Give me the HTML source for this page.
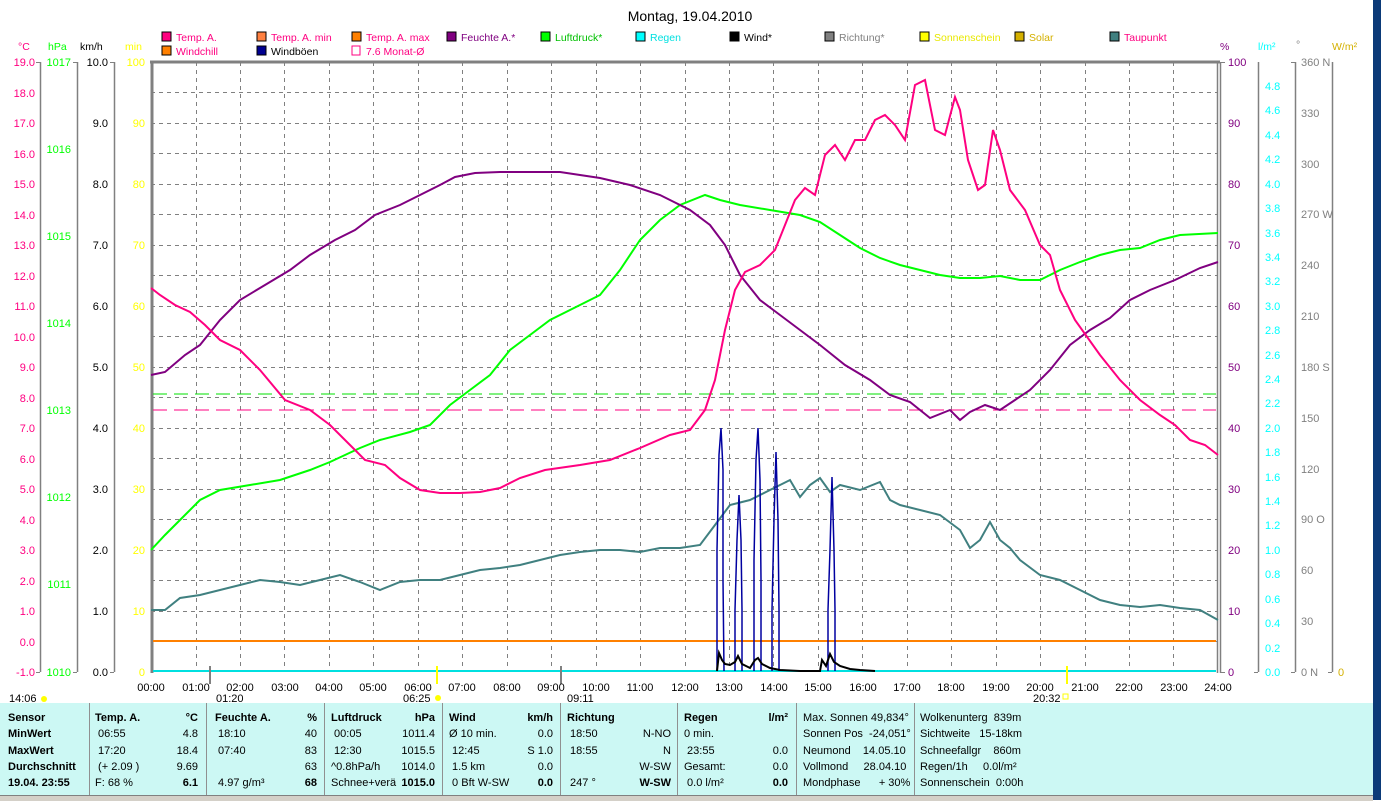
<!DOCTYPE html>
<html><head><meta charset="utf-8"><style>
html,body{margin:0;padding:0;background:#fff;}
body{width:1381px;height:800px;overflow:hidden;position:relative;font-family:"Liberation Sans",sans-serif;}
svg text{font-family:"Liberation Sans",sans-serif;}
.tb{position:absolute;left:0;top:703px;width:1373px;height:92px;background:#ccf8f4;}
.c{position:absolute;font-size:11px;color:#000;white-space:nowrap;}
.b{font-weight:bold}
</style></head><body>
<svg width="1381" height="800" style="position:absolute;left:0;top:0">
<rect x="1373" y="0" width="8" height="800" fill="#0b3a78"/>
<text x="690" y="21" font-size="14" text-anchor="middle">Montag, 19.04.2010</text>
<g font-size="10.5">
<rect x="162" y="32" width="9" height="9" fill="#ff0080" stroke="#000"/><text x="176" y="41" fill="#ff0080">Temp. A.</text>
<rect x="257" y="32" width="9" height="9" fill="#ff8040" stroke="#000"/><text x="271" y="41" fill="#ff0080">Temp. A. min</text>
<rect x="352" y="32" width="9" height="9" fill="#ff8000" stroke="#000"/><text x="366" y="41" fill="#ff0080">Temp. A. max</text>
<rect x="447" y="32" width="9" height="9" fill="#800080" stroke="#000"/><text x="461" y="41" fill="#800080">Feuchte A.*</text>
<rect x="541" y="32" width="9" height="9" fill="#00ff00" stroke="#000"/><text x="555" y="41" fill="#00c000">Luftdruck*</text>
<rect x="636" y="32" width="9" height="9" fill="#00ffff" stroke="#000"/><text x="650" y="41" fill="#00e0e0">Regen</text>
<rect x="730" y="32" width="9" height="9" fill="#000" stroke="#000"/><text x="744" y="41" fill="#000">Wind*</text>
<rect x="825" y="32" width="9" height="9" fill="#808080" stroke="#000"/><text x="839" y="41" fill="#808080">Richtung*</text>
<rect x="920" y="32" width="9" height="9" fill="#ffff00" stroke="#000"/><text x="934" y="41" fill="#e8e800">Sonnenschein</text>
<rect x="1015" y="32" width="9" height="9" fill="#d4b000" stroke="#000"/><text x="1029" y="41" fill="#d4b000">Solar</text>
<rect x="1110" y="32" width="9" height="9" fill="#408080" stroke="#000"/><text x="1124" y="41" fill="#ff0080">Taupunkt</text>
<rect x="162" y="46" width="9" height="9" fill="#ff8000" stroke="#000"/><text x="176" y="55" fill="#ff0080">Windchill</text>
<rect x="257" y="46" width="9" height="9" fill="#000090" stroke="#000"/><text x="271" y="55" fill="#000">Windböen</text>
<path d="M352 46h8v9h-8z" fill="none" stroke="#ff0080"/><text x="366" y="55" fill="#ff0080">7.6 Monat-Ø</text>
<text x="18" y="50" fill="#ff0080">°C</text><text x="48" y="50" fill="#00ff00">hPa</text><text x="80" y="50" fill="#000">km/h</text><text x="125" y="50" fill="#ffff00">min</text>
<text x="1220" y="50" fill="#800080">%</text><text x="1258" y="50" fill="#00ffff">l/m²</text><text x="1296" y="48" fill="#808080">°</text><text x="1332" y="50" fill="#d4b000">W/m²</text>
</g>
<g stroke="#808080" stroke-dasharray="4,4" stroke-width="1">
<path d="M151 92.5H1218M151 123.5H1218M151 153.5H1218M151 184.5H1218M151 214.5H1218M151 245.5H1218M151 275.5H1218M151 306.5H1218M151 336.5H1218M151 367.5H1218M151 397.5H1218M151 428.5H1218M151 458.5H1218M151 489.5H1218M151 519.5H1218M151 550.5H1218M151 580.5H1218M151 611.5H1218M151 641.5H1218"/>
<path d="M196.5 62V672M240.5 62V672M284.5 62V672M329.5 62V672M373.5 62V672M418.5 62V672M462.5 62V672M507.5 62V672M551.5 62V672M596.5 62V672M640.5 62V672M685.5 62V672M729.5 62V672M773.5 62V672M818.5 62V672M862.5 62V672M907.5 62V672M951.5 62V672M996.5 62V672M1040.5 62V672M1085.5 62V672M1129.5 62V672M1173.5 62V672"/>
</g>
<path d="M150 62H1220M152 62V673" stroke="#808080" stroke-width="3" fill="none"/>
<path d="M1217.5 62V673M1220.5 62V673" stroke="#808080" stroke-width="1.5" fill="none"/>
<g stroke="#808080" stroke-width="1.5" fill="none">
<path d="M40.5 62V672M77.5 62V672M114.5 62V672M1258.5 62V672M1295.5 62V672M1332.5 62V672"/>
</g>
<g font-size="11" text-anchor="end">
<g fill="#ff0080">
<text x="35" y="66">19.0</text><text x="35" y="97">18.0</text><text x="35" y="127">17.0</text><text x="35" y="158">16.0</text><text x="35" y="188">15.0</text><text x="35" y="219">14.0</text><text x="35" y="249">13.0</text><text x="35" y="280">12.0</text><text x="35" y="310">11.0</text><text x="35" y="341">10.0</text><text x="35" y="371">9.0</text><text x="35" y="402">8.0</text><text x="35" y="432">7.0</text><text x="35" y="463">6.0</text><text x="35" y="493">5.0</text><text x="35" y="524">4.0</text><text x="35" y="554">3.0</text><text x="35" y="585">2.0</text><text x="35" y="615">1.0</text><text x="35" y="646">0.0</text><text x="35" y="676">-1.0</text></g>
<g fill="#00ff00"><text x="71" y="66">1017</text><text x="71" y="153">1016</text><text x="71" y="240">1015</text><text x="71" y="327">1014</text><text x="71" y="414">1013</text><text x="71" y="501">1012</text><text x="71" y="588">1011</text><text x="71" y="676">1010</text></g>
<g fill="#000"><text x="108" y="66">10.0</text><text x="108" y="127">9.0</text><text x="108" y="188">8.0</text><text x="108" y="249">7.0</text><text x="108" y="310">6.0</text><text x="108" y="371">5.0</text><text x="108" y="432">4.0</text><text x="108" y="493">3.0</text><text x="108" y="554">2.0</text><text x="108" y="615">1.0</text><text x="108" y="676">0.0</text></g>
<g fill="#ffff00"><text x="145" y="66">100</text><text x="145" y="127">90</text><text x="145" y="188">80</text><text x="145" y="249">70</text><text x="145" y="310">60</text><text x="145" y="371">50</text><text x="145" y="432">40</text><text x="145" y="493">30</text><text x="145" y="554">20</text><text x="145" y="615">10</text><text x="145" y="676">0</text></g>
</g>
<g font-size="11" fill="#800080"><text x="1228" y="66">100</text><text x="1228" y="127">90</text><text x="1228" y="188">80</text><text x="1228" y="249">70</text><text x="1228" y="310">60</text><text x="1228" y="371">50</text><text x="1228" y="432">40</text><text x="1228" y="493">30</text><text x="1228" y="554">20</text><text x="1228" y="615">10</text><text x="1228" y="676">0</text></g>
<g font-size="11" fill="#00ffff"><text x="1265" y="90">4.8</text><text x="1265" y="114">4.6</text><text x="1265" y="139">4.4</text><text x="1265" y="163">4.2</text><text x="1265" y="188">4.0</text><text x="1265" y="212">3.8</text><text x="1265" y="237">3.6</text><text x="1265" y="261">3.4</text><text x="1265" y="285">3.2</text><text x="1265" y="310">3.0</text><text x="1265" y="334">2.8</text><text x="1265" y="359">2.6</text><text x="1265" y="383">2.4</text><text x="1265" y="407">2.2</text><text x="1265" y="432">2.0</text><text x="1265" y="456">1.8</text><text x="1265" y="481">1.6</text><text x="1265" y="505">1.4</text><text x="1265" y="529">1.2</text><text x="1265" y="554">1.0</text><text x="1265" y="578">0.8</text><text x="1265" y="603">0.6</text><text x="1265" y="627">0.4</text><text x="1265" y="652">0.2</text><text x="1265" y="676">0.0</text></g>
<g font-size="11" fill="#808080"><text x="1301" y="66">360 N</text><text x="1301" y="117">330</text><text x="1301" y="168">300</text><text x="1301" y="218">270 W</text><text x="1301" y="269">240</text><text x="1301" y="320">210</text><text x="1301" y="371">180 S</text><text x="1301" y="422">150</text><text x="1301" y="473">120</text><text x="1301" y="523">90  O</text><text x="1301" y="574">60</text><text x="1301" y="625">30</text><text x="1301" y="676">0   N</text></g>
<text x="1338" y="676" font-size="11" fill="#d4b000">0</text>
<g stroke="#808080" stroke-width="1">
<path d="M36 62.5h4M36 672.5h4M73 62.5h4M73 672.5h4M110 62.5h4M110 672.5h4M1220 62.5h5M1220 672.5h5M1254 672.5h4M1291 62.5h4M1291 672.5h4M1328 672.5h4"/>
</g>
<path d="M153 394H1216" stroke="#00e000" stroke-dasharray="14,7" stroke-width="1"/>
<path d="M153 410H1216" stroke="#ff0080" stroke-dasharray="14,7" stroke-width="1"/>
<path d="M153 641H1216" stroke="#ff8000" stroke-width="2"/>
<path d="M153 671H1216" stroke="#00e0e0" stroke-width="2"/>
<polyline fill="none" stroke="#408080" stroke-width="2" points="151,610 165,610 180,598 200,595 220,590 240,585 260,580 280,582 300,585 320,580 340,575 360,582 380,590 400,582 420,580 440,580 460,575 480,570 500,568 520,565 540,560 560,555 580,552 600,550 620,550 640,552 660,548 680,548 700,545 715,525 730,505 750,500 770,490 790,480 800,497 810,485 820,478 830,492 840,485 860,490 880,482 890,500 900,505 920,510 940,515 960,530 970,548 980,540 990,522 1000,540 1010,548 1020,560 1040,575 1060,580 1080,590 1100,600 1120,605 1140,607 1160,605 1180,608 1200,610 1218,620"/>
<polyline fill="none" stroke="#00ff00" stroke-width="2" points="151,550 165,535 180,520 200,500 220,490 250,485 280,480 310,470 330,462 360,448 380,440 410,432 430,425 450,405 470,390 490,375 510,350 530,335 550,320 570,310 600,295 620,270 640,240 660,220 680,205 705,195 720,200 740,205 770,210 800,215 820,222 840,235 860,248 880,258 900,265 920,270 940,275 960,278 980,278 1000,276 1020,280 1040,280 1060,270 1080,262 1100,255 1120,250 1140,248 1160,240 1180,235 1218,233"/>
<polyline fill="none" stroke="#800080" stroke-width="2" points="151,375 165,372 185,355 200,345 220,320 240,300 265,285 290,270 310,255 335,240 355,230 375,215 400,205 420,195 440,185 455,177 475,173 500,172 530,172 560,172 580,175 600,178 630,185 660,195 690,210 710,225 725,245 740,275 760,300 780,315 800,330 820,345 845,365 870,380 890,395 910,402 930,418 950,410 960,420 970,412 985,405 1000,410 1015,400 1030,390 1050,370 1070,345 1090,330 1110,318 1130,300 1150,290 1175,280 1200,268 1218,262"/>
<polyline fill="none" stroke="#ff0080" stroke-width="2" points="151,288 160,295 175,305 190,312 205,325 220,340 240,350 260,370 285,400 310,410 330,425 350,445 365,460 385,465 400,478 420,490 440,493 460,493 480,492 500,488 520,478 545,470 580,465 610,460 640,448 670,435 690,430 705,410 715,380 725,330 735,290 745,272 760,265 775,250 785,225 795,200 805,188 815,195 825,155 835,145 845,160 855,140 865,140 875,120 885,115 895,125 905,140 915,85 925,80 935,130 945,135 955,97 960,110 968,160 978,190 985,185 993,130 1000,150 1010,190 1025,210 1040,245 1050,255 1060,290 1075,320 1100,355 1120,380 1140,400 1160,415 1175,425 1190,440 1205,445 1218,455"/>
<g fill="none" stroke="#0000a0" stroke-width="1.5">
<path d="M717 671V550L719 455L721 428L723 470V580L724 671"/>
<path d="M735 671V610L737 540L739 495L741 540L742 610V671"/>
<path d="M754 671V560L756 460L758 428L760 480L761 580V671"/>
<path d="M772 671V610L774 520L776 452L778 520L779 610V671"/>
<path d="M828 671V610L830 550L832 477L834 550L835 610V671"/>
</g>
<polyline fill="none" stroke="#000" stroke-width="2" points="717,671 719,653 722,660 725,664 730,665 735,662 738,656 742,664 750,668 755,660 758,658 762,664 770,668 780,670 800,671 820,671 822,660 826,666 830,654 834,662 840,666 850,669 860,670 875,671"/>
<path d="M437 666V684M1067 666V684" stroke="#ffff00" stroke-width="2"/>
<path d="M210 666V684M561 666V684" stroke="#808080" stroke-width="2"/>
<g font-size="11" text-anchor="middle">
<text x="151" y="691">00:00</text><text x="196" y="691">01:00</text><text x="240" y="691">02:00</text><text x="285" y="691">03:00</text><text x="329" y="691">04:00</text><text x="373" y="691">05:00</text><text x="418" y="691">06:00</text><text x="462" y="691">07:00</text><text x="507" y="691">08:00</text><text x="551" y="691">09:00</text><text x="596" y="691">10:00</text><text x="640" y="691">11:00</text><text x="685" y="691">12:00</text><text x="729" y="691">13:00</text><text x="774" y="691">14:00</text><text x="818" y="691">15:00</text><text x="863" y="691">16:00</text><text x="907" y="691">17:00</text><text x="951" y="691">18:00</text><text x="996" y="691">19:00</text><text x="1040" y="691">20:00</text><text x="1085" y="691">21:00</text><text x="1129" y="691">22:00</text><text x="1174" y="691">23:00</text><text x="1218" y="691">24:00</text>
</g>
<g font-size="11">
<text x="9" y="702">14:06</text><circle cx="44" cy="699" r="3" fill="#ffff00"/>
<text x="216" y="702">01:20</text><text x="403" y="702">06:25</text><circle cx="438" cy="698" r="3" fill="#ffff00"/>
<text x="567" y="702">09:11</text><text x="1033" y="702">20:32</text><rect x="1063" y="694" width="5" height="5" fill="none" stroke="#ffff00"/>
</g>
</svg>
<div class="tb"></div>
<div style="position:absolute;left:0;top:795px;width:1373px;height:5px;background:#d4d0c8;border-top:1px solid #808080"></div>
<div style="position:absolute;top:703px;left:89px;width:1px;height:92px;background:#909090"></div>
<div style="position:absolute;top:703px;left:206px;width:1px;height:92px;background:#909090"></div>
<div style="position:absolute;top:703px;left:324px;width:1px;height:92px;background:#909090"></div>
<div style="position:absolute;top:703px;left:442px;width:1px;height:92px;background:#909090"></div>
<div style="position:absolute;top:703px;left:560px;width:1px;height:92px;background:#909090"></div>
<div style="position:absolute;top:703px;left:677px;width:1px;height:92px;background:#909090"></div>
<div style="position:absolute;top:703px;left:796px;width:1px;height:92px;background:#909090"></div>
<div style="position:absolute;top:703px;left:914px;width:1px;height:92px;background:#909090"></div>
<div class="c b" style="left:8px;top:710px;line-height:16.3px">Sensor<br>MinWert<br>MaxWert<br>Durchschnitt<br>19.04. 23:55</div>
<div class="c" style="left:95px;top:710px;line-height:16.3px"><b>Temp. A.</b><br>&nbsp;06:55<br>&nbsp;17:20<br>&nbsp;(+ 2.09 )<br>F: 68 %</div>
<div class="c" style="left:150px;width:48px;text-align:right;top:710px;line-height:16.3px"><b>°C</b><br>4.8<br>18.4<br>9.69<br><b>6.1</b></div>
<div class="c" style="left:215px;top:710px;line-height:16.3px"><b>Feuchte A.</b><br>&nbsp;18:10<br>&nbsp;07:40<br>&nbsp;<br>&nbsp;4.97 g/m³</div>
<div class="c" style="left:270px;width:47px;text-align:right;top:710px;line-height:16.3px"><b>%</b><br>40<br>83<br>63<br><b>68</b></div>
<div class="c" style="left:331px;top:710px;line-height:16.3px"><b>Luftdruck</b><br>&nbsp;00:05<br>&nbsp;12:30<br>^0.8hPa/h<br>Schnee+verä</div>
<div class="c" style="left:385px;width:50px;text-align:right;top:710px;line-height:16.3px"><b>hPa</b><br>1011.4<br>1015.5<br>1014.0<br><b>1015.0</b></div>
<div class="c" style="left:449px;top:710px;line-height:16.3px"><b>Wind</b><br>Ø 10 min.<br>&nbsp;12:45<br>&nbsp;1.5 km<br>&nbsp;0 Bft W-SW</div>
<div class="c" style="left:500px;width:53px;text-align:right;top:710px;line-height:16.3px"><b>km/h</b><br>0.0<br>S 1.0<br>0.0<br><b>0.0</b></div>
<div class="c" style="left:567px;top:710px;line-height:16.3px"><b>Richtung</b><br>&nbsp;18:50<br>&nbsp;18:55<br>&nbsp;<br>&nbsp;247 °</div>
<div class="c" style="left:620px;width:51px;text-align:right;top:710px;line-height:16.3px">&nbsp;<br>N-NO<br>N<br>W-SW<br><b>W-SW</b></div>
<div class="c" style="left:684px;top:710px;line-height:16.3px"><b>Regen</b><br>0 min.<br>&nbsp;23:55<br>Gesamt:<br>&nbsp;0.0 l/m²</div>
<div class="c" style="left:740px;width:48px;text-align:right;top:710px;line-height:16.3px"><b>l/m²</b><br>&nbsp;<br>0.0<br>0.0<br><b>0.0</b></div>
<div class="c" style="left:803px;top:710px;line-height:16.3px">Max. Sonnen 49,834°<br>Sonnen Pos&nbsp; -24,051°<br>Neumond&nbsp;&nbsp;&nbsp; 14.05.10<br>Vollmond&nbsp;&nbsp;&nbsp;&nbsp; 28.04.10<br>Mondphase&nbsp;&nbsp;&nbsp;&nbsp;&nbsp; + 30%</div>
<div class="c" style="left:920px;top:710px;line-height:16.3px">Wolkenunterg&nbsp; 839m<br>Sichtweite&nbsp;&nbsp; 15-18km<br>Schneefallgr&nbsp;&nbsp;&nbsp; 860m<br>Regen/1h&nbsp;&nbsp;&nbsp;&nbsp; 0.0l/m²<br>Sonnenschein&nbsp; 0:00h</div>
</body></html>
